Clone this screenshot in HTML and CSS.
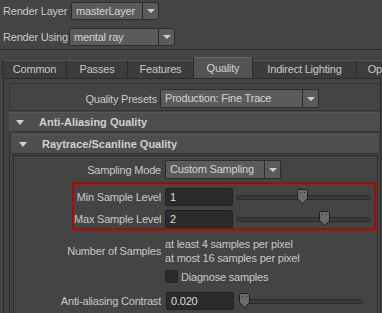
FILE: index.html
```html
<!DOCTYPE html>
<html lang="en">

<head>
    <meta charset="UTF-8" />
    <title>Render Settings</title>
    <link rel="stylesheet" href="styles.css">
</head>

<body>

    <div id="top">
        <div class="top-row">
            <span class="top-label label-layer">Render Layer</span>
            <div class="combo combo-layer"><span class="combo-text">masterLayer</span><span class="combo-arrow"></span></div>
        </div>
        <div class="top-row">
            <span class="top-label label-using">Render Using</span>
            <div class="combo combo-using"><span class="combo-text">mental ray</span><span class="combo-arrow"></span></div>
        </div>
    </div>

    <div id="divider"></div>

    <div id="tabs">
        <div class="tab tab-common">Common</div>
        <div class="tab tab-passes">Passes</div>
        <div class="tab tab-features">Features</div>
        <div class="tab tab-quality active">Quality</div>
        <div class="tab tab-indirect">Indirect Lighting</div>
        <div class="tab tab-options">Options</div>
    </div>

    <div id="panel">
        <div id="presets">
            <span class="presets-label">Quality Presets</span>
            <div class="combo combo-presets"><span class="combo-text">Production: Fine Trace</span><span class="combo-arrow"></span></div>
        </div>

        <div class="section section-aa">
            <div class="section-head"><span class="caret"></span>Anti-Aliasing Quality</div>
            <div class="section-body">
                <div class="section section-rt">
                    <div class="section-head"><span class="caret"></span>Raytrace/Scanline Quality</div>
                    <div class="frame">
                        <div class="row">
                            <span class="label">Sampling Mode</span>
                            <div class="combo combo-mode"><span class="combo-text">Custom Sampling</span><span class="combo-arrow"></span></div>
                        </div>

                        <div id="highlight">
                            <div class="row row-slider">
                                <span class="label label-short">Min Sample Level</span>
                                <div class="field">1</div>
                                <div class="slider">
                                    <div class="track"></div>
                                    <svg class="thumb" style="left: 49%" width="11" height="15" viewBox="0 0 11 15"><path d="M0.5 1.5 Q0.5 0.5 1.5 0.5 H9.5 Q10.5 0.5 10.5 1.5 V9.5 L5.5 14.5 L0.5 9.5 Z" fill="#6b6b6b" stroke="#1e1e1e"/><rect x="3" y="3" width="1" height="1" fill="#2a2a2a"/><rect x="7" y="3" width="1" height="1" fill="#2a2a2a"/></svg>
                                </div>
                            </div>
                            <div class="row row-slider">
                                <span class="label label-short">Max Sample Level</span>
                                <div class="field">2</div>
                                <div class="slider">
                                    <div class="track"></div>
                                    <svg class="thumb" style="left: 65%" width="11" height="15" viewBox="0 0 11 15"><path d="M0.5 1.5 Q0.5 0.5 1.5 0.5 H9.5 Q10.5 0.5 10.5 1.5 V9.5 L5.5 14.5 L0.5 9.5 Z" fill="#6b6b6b" stroke="#1e1e1e"/><rect x="3" y="3" width="1" height="1" fill="#2a2a2a"/><rect x="7" y="3" width="1" height="1" fill="#2a2a2a"/></svg>
                                </div>
                            </div>
                        </div>

                        <div class="row row-info">
                            <span class="label">Number of Samples</span>
                            <div class="info">
                                <div>at least 4 samples per pixel</div>
                                <div>at most 16 samples per pixel</div>
                            </div>
                        </div>

                        <div class="row row-check">
                            <span class="label"></span>
                            <span class="checkbox"></span>
                            <span class="check-text">Diagnose samples</span>
                        </div>

                        <div class="row row-contrast">
                            <span class="label">Anti-aliasing Contrast</span>
                            <div class="field field-contrast">0.020</div>
                            <div class="slider slider-contrast">
                                <div class="track"></div>
                                <svg class="thumb" style="left: 4%" width="11" height="15" viewBox="0 0 11 15"><path d="M0.5 1.5 Q0.5 0.5 1.5 0.5 H9.5 Q10.5 0.5 10.5 1.5 V9.5 L5.5 14.5 L0.5 9.5 Z" fill="#6b6b6b" stroke="#1e1e1e"/><rect x="3" y="3" width="1" height="1" fill="#2a2a2a"/><rect x="7" y="3" width="1" height="1" fill="#2a2a2a"/></svg>
                            </div>
                        </div>
                    </div>
                </div>
            </div>
        </div>
    </div>

</body>

</html>
```

FILE: styles.css
```css
body {
    margin: 0;
    width: 382px;
    height: 313px;
    overflow: hidden;
    background: #444444;
    font-family: "Liberation Sans", Arial, sans-serif;
    font-size: 11px;
    letter-spacing: -0.2px;
    color: #c8c8c8;
}

#top {
    padding: 2px 0 0 3px;
    display: flex;
    flex-direction: column;
    gap: 8px;
}

.top-row {
    display: flex;
    align-items: center;
    gap: 3px;
    height: 18px;
}

.top-label {
    white-space: nowrap;
}

.label-layer {
    width: 65px;
}

.label-using {
    width: 63px;
}

.combo {
    display: flex;
    height: 19px;
    box-sizing: border-box;
    border: 1px solid #2c2c2c;
    border-radius: 2px;
    background: #5b5b5b;
    color: #d4d4d4;
}

.top-row .combo {
    height: 18px;
}

.combo-text {
    flex-grow: 1;
    padding-left: 4px;
    line-height: 17px;
    white-space: nowrap;
    overflow: hidden;
}

.combo-arrow {
    width: 15px;
    border-left: 1px solid #2c2c2c;
    display: flex;
    justify-content: center;
    align-items: center;
}

.combo-arrow::after {
    content: "";
    border-left: 4px solid transparent;
    border-right: 4px solid transparent;
    border-top: 4px solid #d0d0d0;
}

.combo-layer {
    width: 88px;
}

.combo-using {
    width: 106px;
}

#divider {
    margin-top: 3px;
    border-top: 1px solid #2c2c2c;
    border-bottom: 1px solid #4b4b4b;
}

#tabs {
    display: flex;
    align-items: flex-end;
    height: 27px;
    padding-left: 3px;
    white-space: nowrap;
    overflow: hidden;
}

.tab {
    height: 18px;
    box-sizing: border-box;
    margin-left: -1px;
    border: 1px solid #2b2b2b;
    border-bottom: none;
    border-top-color: #555555;
    border-radius: 2px 2px 0 0;
    background: #3c3c3c;
    text-align: center;
    line-height: 17px;
    flex-shrink: 0;
}

.tab.active {
    height: 21px;
    background: #535353;
    border-top-color: #6a6a6a;
    line-height: 20px;
    color: #d2d2d2;
}

.tab-common { width: 65px; }
.tab-passes { width: 62px; }
.tab-features { width: 67px; }
.tab-quality { width: 60px; }
.tab-indirect { width: 105px; }
.tab-options { width: 60px; }

#panel {
    margin: 0 1px 0 3px;
    height: 230px;
    overflow: hidden;
    border: 1px solid #2b2b2b;
    border-bottom: none;
    padding: 4px 0 0 5px;
}

#presets {
    display: flex;
    align-items: center;
    gap: 3px;
    border: 1px solid #333333;
    border-right: none;
    padding: 5px 0 2px 0;
}

.presets-label {
    width: 147px;
    text-align: right;
}

.combo-presets {
    width: 159px;
}

.section-head {
    display: flex;
    align-items: center;
    height: 20px;
    box-sizing: border-box;
    background: #4e4e4e;
    border-top: 1px solid #585858;
    border-bottom: 1px solid #333333;
    font-weight: bold;
    letter-spacing: 0;
    color: #d0d0d0;
    white-space: nowrap;
}

.caret {
    margin: 0 15px 0 7px;
    border-left: 4.5px solid transparent;
    border-right: 4.5px solid transparent;
    border-top: 5px solid #d0d0d0;
}

.section-aa {
    margin-top: 1px;
}

.section-body {
    border-left: 1px solid #2e2e2e;
    padding: 2px 0 0 2px;
}

.section-rt {
    margin-right: 1px;
}

.frame {
    margin: 1px 1px 0 1px;
    border: 1px solid #2e2e2e;
    border-bottom: none;
    padding-top: 4px;
    height: 153px;
}

.row {
    display: flex;
    align-items: center;
    gap: 4px;
}

.label {
    width: 147px;
    flex-shrink: 0;
    text-align: right;
    white-space: nowrap;
}

.combo-mode {
    width: 116px;
}

#highlight {
    margin: 3px 1px 0 58px;
    border: 2px solid #bd0000;
    padding: 4px 3px 0 0;
    display: flex;
    flex-direction: column;
    gap: 4px;
}

.label-short {
    width: 87px;
}

.row-slider {
    height: 18px;
}

.field {
    width: 68px;
    height: 18px;
    box-sizing: border-box;
    border: 1px solid #232323;
    border-top-color: #1f1f1f;
    border-radius: 2px;
    background: #2b2b2b;
    color: #dddddd;
    padding-left: 4px;
    line-height: 16px;
    flex-shrink: 0;
}

.slider {
    flex-grow: 1;
    position: relative;
    height: 18px;
    display: flex;
    align-items: center;
    margin-left: -1px;
}

.track {
    width: 100%;
    height: 5px;
    box-sizing: border-box;
    border: 1px solid #2a2a2a;
    border-radius: 3px;
    background: #3a3a3a;
}

.thumb {
    position: absolute;
    top: 1px;
    margin-left: -5px;
}

.row-info {
    margin-top: 7px;
    align-items: center;
}

.info {
    line-height: 14px;
    white-space: nowrap;
}

.row-check {
    margin-top: 5px;
}

.checkbox {
    width: 13px;
    height: 13px;
    box-sizing: border-box;
    border: 1px solid #262626;
    border-radius: 2px;
    background: #2b2b2b;
}

.check-text {
    margin-left: -1px;
}

.row-contrast {
    margin-top: 9px;
}

.field-contrast {
    margin-left: 1px;
}

.slider-contrast {
    flex-grow: 0;
    width: 124px;
    margin-left: 1px;
}
```
